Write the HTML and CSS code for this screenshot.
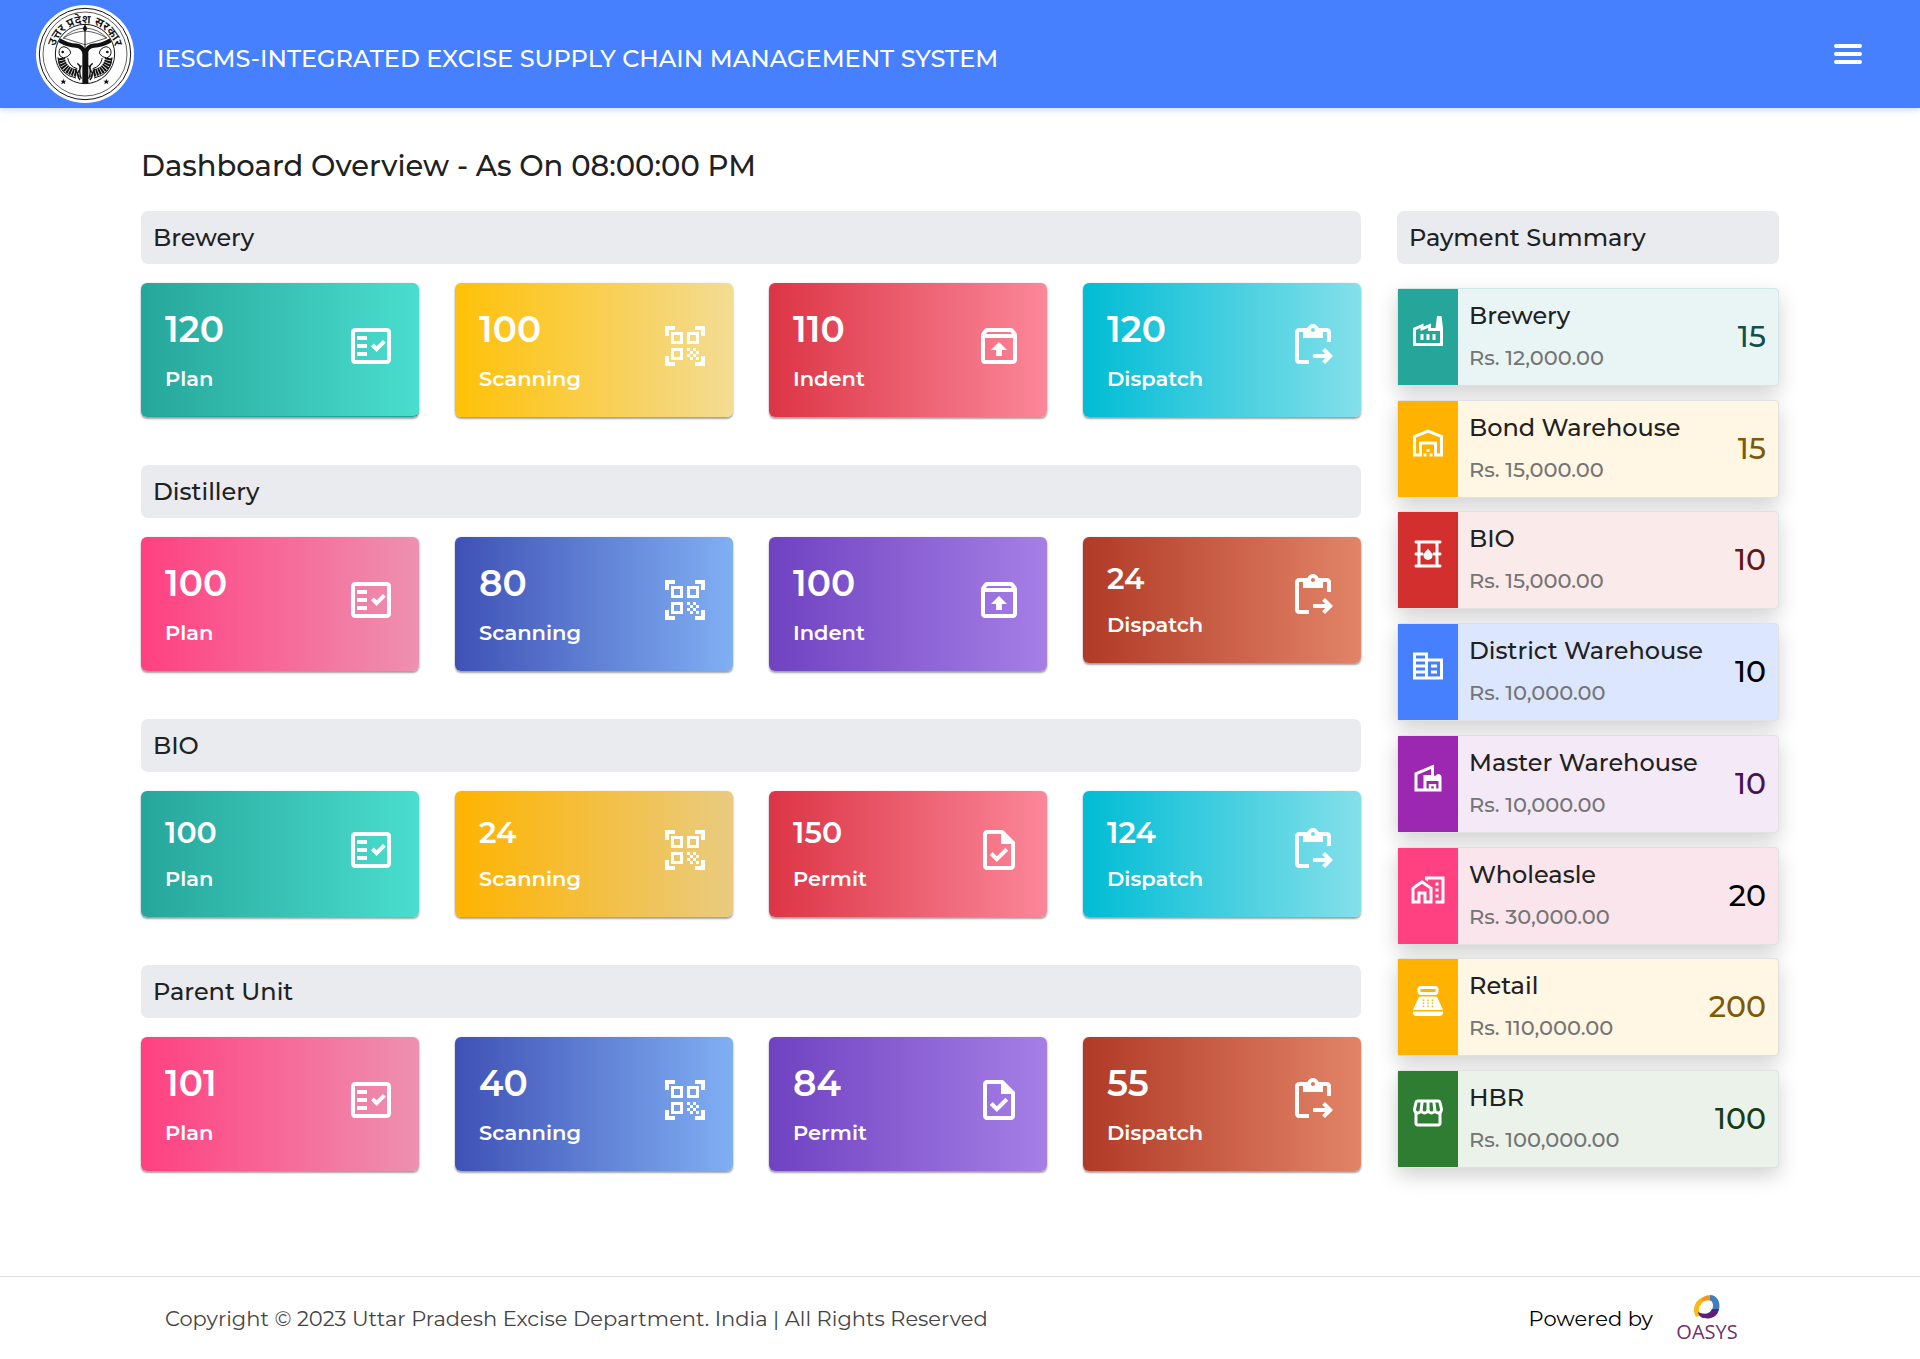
FILE: index.html
```html
<!DOCTYPE html>
<html lang="en">
<head>
<meta charset="utf-8">
<title>IESCMS Dashboard</title>
<meta name="viewport" content="width=device-width, initial-scale=1">
<link rel="stylesheet" href="styles.css">
</head>
<body>
<svg class="sprite" aria-hidden="true">
  <symbol id="i-plan" viewBox="0 0 24 24"><path d="M20 3H4c-1.100 0-2 .9-2 2v14c0 1.100.9 2 2 2h16c1.100 0 2-.9 2-2V5c0-1.100-.9-2-2-2zm0 16H4V5h16v14zM19.410 10.420 17.990 9l-3.170 3.170-1.410-1.420L12 12.160 14.820 15zM5 7h5v2H5zM5 11h5v2H5zM5 15h5v2H5z"/></symbol>
  <symbol id="i-scan" viewBox="0 0 24 24"><path d="M9.500 6.500v3h-3v-3h3M11 5H5v6h6V5zm-1.500 9.500v3h-3v-3h3M11 13H5v6h6v-6zm6.500-6.500v3h-3v-3h3M19 5h-6v6h6V5zm-6 8h1.500v1.500H13V13zm1.500 1.500H16V16h-1.500v-1.500zM16 13h1.500v1.500H16V13zm-3 3h1.500v1.500H13V16zm1.500 1.500H16V19h-1.500v-1.500zM16 16h1.500v1.500H16V16zm1.500-1.500H19V16h-1.500v-1.500zm0 3H19V19h-1.500v-1.500zM22 7h-2V4h-3V2h5v5zm0 15v-5h-2v3h-3v2h5zM2 22h5v-2H4v-3H2v5zM2 2v5h2V4h3V2H2z"/></symbol>
  <symbol id="i-indent" viewBox="0 0 24 24"><path d="m20.550 5.220-1.390-1.680C18.880 3.210 18.470 3 18 3H6c-.47 0-.88.21-1.150.55L3.460 5.220C3.170 5.570 3 6.010 3 6.500V19c0 1.100.89 2 2 2h14c1.100 0 2-.9 2-2V6.500c0-.49-.17-.93-.45-1.280zM6.240 5h11.520l.83 1H5.420l.82-1zM5 19V8h14v11H5zm3-5h2.550v3h2.900v-3H16l-4-4z"/></symbol>
  <symbol id="i-dispatch" viewBox="0 0 24 24"><path d="M5 5h2v3h10V5h2v5h2V5c0-1.100-.9-2-2-2h-4.180C14.400 1.840 13.300 1 12 1s-2.400.84-2.820 2H5c-1.100 0-2 .9-2 2v14c0 1.100.9 2 2 2h5v-2H5V5zm7-2c.55 0 1 .45 1 1s-.45 1-1 1-1-.45-1-1 .45-1 1-1zM18.010 13l-1.420 1.410 1.580 1.580H12v2h6.170l-1.580 1.580L18.010 21 22 16.990z"/></symbol>
  <symbol id="i-permit" viewBox="0 0 24 24"><path d="M14 2H6c-1.100 0-2 .9-2 2v16c0 1.100.89 2 2 2h12c1.100 0 2-.9 2-2V8l-6-6zm4 18H6V4h7v5h5v11zM8.820 13.050 7.400 14.460 10.940 18l5.660-5.660-1.410-1.410-4.240 4.240z"/></symbol>
  <symbol id="i-factory" viewBox="0 0 24 24"><path d="M22 22H2V10l7-3v2l5-2v3h3l1-8h3l1 8v12zM12 9.950l-5 2V10l-3 1.320V20h16v-8h-8V9.950zM11 18h2v-4h-2v4zm-4 0h2v-4H7v4zm10-4h-2v4h2v-4z"/></symbol>
  <symbol id="i-warehouse" viewBox="0 0 24 24"><path d="M20 8.350V19h-2v-8H6v8H4V8.350l8-3.200 8 3.200zM22 21V7L12 3 2 7v14h6v-8h8v8h6zm-11-2H9v2h2v-2zm2-3h-2v2h2v-2zm2 3h-2v2h2v-2z"/></symbol>
  <symbol id="i-barrel" viewBox="0 0 24 24"><path fill-rule="evenodd" d="M20 13c.55 0 1-.45 1-1s-.45-1-1-1h-1V5h1c.55 0 1-.45 1-1s-.45-1-1-1H4c-.55 0-1 .45-1 1s.45 1 1 1h1v6H4c-.55 0-1 .45-1 1s.45 1 1 1h1v6H4c-.55 0-1 .45-1 1s.45 1 1 1h16c.55 0 1-.45 1-1s-.45-1-1-1h-1v-6h1zM17 19H7v-6h1c.55 0 1-.45 1-1s-.45-1-1-1H7V5h10v6h-1c-.55 0-1 .45-1 1s.45 1 1 1h1v6zM12 16c1.660 0 3-1.320 3-2.950 0-1.300-.52-1.670-3-4.550-2.470 2.860-3 3.240-3 4.550C9 14.680 10.340 16 12 16z"/></symbol>
  <symbol id="i-district" viewBox="0 0 24 24"><path fill-rule="evenodd" d="M12 7V3H2v18h20V7H12zm-2 12H4v-2h6v2zm0-4H4v-2h6v2zm0-4H4V9h6v2zm0-4H4V5h6v2zm10 12h-8V9h8v10zm-2-8h-4v2h4v-2zm0 4h-4v2h4v-2z"/></symbol>
  <symbol id="i-master" viewBox="0 0 24 24"><path fill-rule="evenodd" d="M3 21V8.500L16 3v7.500h1.200a2 2 0 0 1 3.800 1V21H3zM5 19h4v-9h5V6L5 9.900V19zM11 19h1.500v-3h5v3H19v-5h-8zM14.200 17.500h1.600V19h-1.600z"/></symbol>
  <symbol id="i-wholesale" viewBox="0 0 24 24"><path d="M17 11h2v2h-2zM17 15h2v2h-2zM17 7h2v2h-2zM10 3v1.970l2 1.430V5h9v14h-4v2h6V3zM8 5.370l-7 5V21h6v-6h2v6h6V10.370l-7-5zM13 19h-2v-6H5v6H3v-7.600l5-3.570 5 3.570V19z"/></symbol>
  <symbol id="i-retail" viewBox="0 0 24 24"><path fill-rule="evenodd" d="M17 2H7c-1.100 0-2 .9-2 2v2c0 1.100.9 2 2 2h10c1.100 0 2-.9 2-2V4c0-1.100-.9-2-2-2zm0 4H7V4h10v2zm3 16H4c-1.100 0-2-.9-2-2v-1h20v1c0 1.100-.9 2-2 2zM18.530 10.190C18.210 9.470 17.490 9 16.700 9H7.300c-.79 0-1.510.47-1.830 1.190L2 18h20l-3.470-7.810zM9.500 16h-1v-1h1v1zm0-2h-1v-1h1v1zm0-2h-1v-1h1v1zm3 4h-1v-1h1v1zm0-2h-1v-1h1v1zm0-2h-1v-1h1v1zm3 4h-1v-1h1v1zm0-2h-1v-1h1v1zm0-2h-1v-1h1v1z"/></symbol>
  <symbol id="i-store" viewBox="0 0 24 24"><path d="m21.900 8.890-1.050-4.370c-.22-.9-1-1.520-1.910-1.520H5.050c-.9 0-1.690.63-1.900 1.520L2.100 8.890c-.24 1.020-.02 2.060.62 2.880.08.11.19.19.28.29V19c0 1.100.9 2 2 2h14c1.100 0 2-.9 2-2v-6.940c.09-.09.2-.18.28-.28.64-.82.87-1.870.62-2.890zm-2.990-3.900 1.050 4.370c.1.42.01.84-.25 1.170-.14.18-.44.47-.94.47-.61 0-1.140-.49-1.210-1.140L16.980 5l1.930-.01zM13 5h1.960l.54 4.520c.05.39-.07.78-.33 1.070-.22.26-.54.41-.95.41-.67 0-1.220-.59-1.220-1.310V5zM8.490 9.520 9.040 5H11v4.690c0 .72-.55 1.310-1.290 1.310-.34 0-.65-.15-.89-.41-.25-.29-.37-.68-.33-1.070zm-4.450-.16L5.050 5h1.970l-.58 4.860c-.08.65-.6 1.140-1.210 1.140-.49 0-.8-.29-.93-.47-.27-.32-.36-.75-.26-1.170zM5 19v-6.030c.08.01.15.03.23.03.87 0 1.660-.36 2.240-.95.6.6 1.400.95 2.310.95.87 0 1.650-.36 2.230-.93.59.57 1.390.93 2.290.93.84 0 1.640-.35 2.240-.95.58.59 1.370.95 2.240.95.08 0 .15-.02.23-.03V19H5z"/></symbol>
</svg>

<header class="topbar">
  <svg class="emblem" viewBox="108 15 294 294" role="img" aria-label="Uttar Pradesh Government emblem">
    <circle cx="255" cy="162" r="147" fill="#fff"/>
    <g fill="none" stroke="#111">
      <circle cx="255" cy="162" r="137" stroke-width="3"/>
      <circle cx="255" cy="162" r="126" stroke-width="2"/>
      <circle cx="255" cy="162" r="89" stroke-width="3"/>
      <path d="M190 114Q215 86 255 84Q295 86 320 114L255 134Z" stroke-width="2"/>
      <path d="M190 114Q218 96 255 93Q292 96 320 114" stroke-width="2"/>
      <path d="M255 80V150" stroke-width="3"/>
      <path d="M178 121Q205 136 228 137Q248 139 255 160Q262 139 282 137Q305 136 332 121" stroke-width="13"/>
      <path d="M256 148V250" stroke-width="18"/>
      <g id="fish">
        <path d="M177 160Q176 142 192 140Q211 145 212 160Q205 172 190 174Q178 170 177 160Z" stroke-width="3"/>
        <path d="M184 174Q188 212 232 220" stroke-width="22" stroke-dasharray="6 2"/>
        <path d="M203 174Q208 200 232 206M174 172Q176 224 228 234" stroke-width="3"/>
        <path d="M232 190Q246 200 236 214Q228 224 240 240M244 196Q234 212 244 236M226 206L238 232" stroke-width="4"/>
      </g>
      <use href="#fish" transform="matrix(-1 0 0 1 510 0)"/>
    </g>
    <g fill="#111">
      <circle cx="188" cy="156" r="4"/><circle cx="322" cy="156" r="4"/>
      <path d="M255 72l7 14-7 10-7-10z"/>
      <path id="star" d="M190 236l2 6h7l-5 4 2 7-6-4-6 4 2-7-5-4h7z"/>
      <use href="#star" x="129"/>
      <path id="arc" d="M163 162A92 92 0 0 1 347 162" fill="none"/>
      <text class="emblem-text" text-anchor="middle"><textPath href="#arc" startOffset="50%">उत्तर प्रदेश सरकार</textPath></text>
    </g>
  </svg>
  <h1 class="brand">IESCMS-INTEGRATED EXCISE SUPPLY CHAIN MANAGEMENT SYSTEM</h1>
  <button class="menu" type="button" aria-label="Menu"><span></span><span></span><span></span></button>
</header>

<main class="page">
  <h2 class="page-title">Dashboard Overview - As On 08:00:00 PM</h2>
  <div class="columns">
    <div class="units">
      <section>
        <h3 class="bar">Brewery</h3>
        <div class="cards">
          <article class="card teal lined"><div><p class="num">120</p><p class="label">Plan</p></div><svg class="icon"><use href="#i-plan"/></svg></article>
          <article class="card yellow"><div><p class="num">100</p><p class="label">Scanning</p></div><svg class="icon"><use href="#i-scan"/></svg></article>
          <article class="card red"><div><p class="num">110</p><p class="label">Indent</p></div><svg class="icon"><use href="#i-indent"/></svg></article>
          <article class="card cyan"><div><p class="num">120</p><p class="label">Dispatch</p></div><svg class="icon"><use href="#i-dispatch"/></svg></article>
        </div>
      </section>
      <section>
        <h3 class="bar">Distillery</h3>
        <div class="cards">
          <article class="card pink"><div><p class="num">100</p><p class="label">Plan</p></div><svg class="icon"><use href="#i-plan"/></svg></article>
          <article class="card indigo"><div><p class="num">80</p><p class="label">Scanning</p></div><svg class="icon"><use href="#i-scan"/></svg></article>
          <article class="card purple"><div><p class="num">100</p><p class="label">Indent</p></div><svg class="icon"><use href="#i-indent"/></svg></article>
          <article class="card brown"><div><p class="num small">24</p><p class="label">Dispatch</p></div><svg class="icon"><use href="#i-dispatch"/></svg></article>
        </div>
      </section>
      <section>
        <h3 class="bar">BIO</h3>
        <div class="cards">
          <article class="card teal"><div><p class="num small">100</p><p class="label">Plan</p></div><svg class="icon"><use href="#i-plan"/></svg></article>
          <article class="card amber"><div><p class="num small">24</p><p class="label">Scanning</p></div><svg class="icon"><use href="#i-scan"/></svg></article>
          <article class="card red"><div><p class="num small">150</p><p class="label">Permit</p></div><svg class="icon"><use href="#i-permit"/></svg></article>
          <article class="card cyan"><div><p class="num small">124</p><p class="label">Dispatch</p></div><svg class="icon"><use href="#i-dispatch"/></svg></article>
        </div>
      </section>
      <section>
        <h3 class="bar">Parent Unit</h3>
        <div class="cards">
          <article class="card pink"><div><p class="num">101</p><p class="label">Plan</p></div><svg class="icon"><use href="#i-plan"/></svg></article>
          <article class="card indigo"><div><p class="num">40</p><p class="label">Scanning</p></div><svg class="icon"><use href="#i-scan"/></svg></article>
          <article class="card purple"><div><p class="num">84</p><p class="label">Permit</p></div><svg class="icon"><use href="#i-permit"/></svg></article>
          <article class="card brown"><div><p class="num">55</p><p class="label">Dispatch</p></div><svg class="icon"><use href="#i-dispatch"/></svg></article>
        </div>
      </section>
    </div>

    <aside class="payments">
      <h3 class="bar">Payment Summary</h3>
      <ul class="pay-list">
        <li class="pay p-teal"><span class="tile"><svg><use href="#i-factory"/></svg></span><div class="info"><p class="name">Brewery</p><p class="amount">Rs. 12,000.00</p></div><span class="count">15</span></li>
        <li class="pay p-amber"><span class="tile"><svg><use href="#i-warehouse"/></svg></span><div class="info"><p class="name">Bond Warehouse</p><p class="amount">Rs. 15,000.00</p></div><span class="count">15</span></li>
        <li class="pay p-red"><span class="tile"><svg><use href="#i-barrel"/></svg></span><div class="info"><p class="name">BIO</p><p class="amount">Rs. 15,000.00</p></div><span class="count">10</span></li>
        <li class="pay p-blue"><span class="tile"><svg><use href="#i-district"/></svg></span><div class="info"><p class="name">District Warehouse</p><p class="amount">Rs. 10,000.00</p></div><span class="count">10</span></li>
        <li class="pay p-purple"><span class="tile"><svg><use href="#i-master"/></svg></span><div class="info"><p class="name">Master Warehouse</p><p class="amount">Rs. 10,000.00</p></div><span class="count">10</span></li>
        <li class="pay p-pink"><span class="tile"><svg><use href="#i-wholesale"/></svg></span><div class="info"><p class="name">Wholeasle</p><p class="amount">Rs. 30,000.00</p></div><span class="count">20</span></li>
        <li class="pay p-amber"><span class="tile"><svg><use href="#i-retail"/></svg></span><div class="info"><p class="name">Retail</p><p class="amount">Rs. 110,000.00</p></div><span class="count">200</span></li>
        <li class="pay p-green"><span class="tile"><svg><use href="#i-store"/></svg></span><div class="info"><p class="name">HBR</p><p class="amount">Rs. 100,000.00</p></div><span class="count">100</span></li>
      </ul>
    </aside>
  </div>
</main>

<footer class="footer">
  <p class="copy">Copyright © 2023 Uttar Pradesh Excise Department. India | All Rights Reserved</p>
  <div class="powered">
    <span>Powered by</span>
    <svg class="oasys" viewBox="0 -3 64 52" role="img" aria-label="OASYS">
      <path fill="#f7941e" d="M22 9C25 3 30 0 36 0V6C31 4 27 6 25 11z"/>
      <path fill="#fdb913" d="M26 3C19 7 17 15 21 22L26 20C23 16 23 10 28 7z"/>
      <path fill="#3f7fc1" d="M35 0C42 0 46 7 44 15L37 15C39 10 38 7 35 5z"/>
      <path fill="#5b1f7a" d="M44 14C43 21 36 25 30 23C26 23 24 21 23 17C29 20 35 19 37 14z"/>
      <text x="32" y="44" text-anchor="middle" class="oasys-text">OASYS</text>
    </svg>
  </div>
</footer>
</body>
</html>
```
FILE: styles.css
```css
* { box-sizing: border-box; }
body {
  margin: 0;
  min-height: 100vh;
  display: flex;
  flex-direction: column;
  background: #fff;
  color: #212121;
  font-family: Montserrat, Inter, "Liberation Sans", sans-serif;
  font-weight: 500;
}
h1, h2, h3, p, ul { margin: 0; padding: 0; font-weight: 500; }
ul { list-style: none; }
.sprite { position: absolute; width: 0; height: 0; }

/* Top bar */
.topbar {
  display: flex;
  align-items: center;
  height: 108px;
  padding: 0 58px 0 36px;
  background: #4680ff;
  color: #fff;
  box-shadow: 0 2px 6px rgba(70, 128, 255, .3);
}
.emblem { width: 98px; height: 98px; flex: none; }
.emblem-text { font: 600 36px "Noto Sans Devanagari", "Noto Sans", sans-serif; }
.brand { margin-left: 23px; padding-top: 10px; font-size: 24px; line-height: 32px; color: #fff; }
.menu {
  display: flex;
  flex-direction: column;
  gap: 4px;
  margin-left: auto;
  padding: 0;
  border: 0;
  background: none;
}
.menu span { width: 28px; height: 4px; border-radius: 2px; background: #fff; }

/* Page */
.page { flex: 1; padding: 38px 141px 104px; }
.page-title { font-size: 29px; line-height: 40px; margin-bottom: 25px; }
.columns { display: grid; grid-template-columns: 1220fr 382fr; gap: 36px; }
.bar {
  padding: 0 12px;
  border-radius: 7px;
  background: #e9ebee;
  font-size: 24px;
  line-height: 53px;
}
.units { display: flex; flex-direction: column; gap: 48px; }
.cards {
  display: grid;
  grid-template-columns: repeat(4, 1fr);
  align-items: start;
  gap: 36px;
  margin-top: 19px;
}
.card {
  display: flex;
  align-items: center;
  justify-content: space-between;
  padding: 20px 24px 24px;
  border-radius: 6px;
  color: #fff;
  box-shadow: 0 2px 2px rgba(0, 0, 0, .35), 0 0 2px rgba(0, 0, 0, .15);
}
.lined { padding-bottom: 23px; border-bottom: 1px solid #26a69a; }
.num { font-size: 36px; line-height: 52px; font-weight: 600; }
.num.small { font-size: 30px; line-height: 44px; }
.label { margin-top: 10px; font-size: 21px; line-height: 28px; font-weight: 600; }
.icon { width: 48px; height: 48px; margin-bottom: 4px; fill: currentColor; flex: none; }
.teal { background: linear-gradient(90deg, #26a69a, #4adecf); }
.yellow { background: linear-gradient(90deg, #ffc107, #f3dc94); }
.red { background: linear-gradient(90deg, #dc3545, #fb8799); }
.cyan { background: linear-gradient(90deg, #00bcd4, #84e0ea); }
.pink { background: linear-gradient(90deg, #ff4081, #ee91b0); }
.indigo { background: linear-gradient(90deg, #3f51b5, #80aff3); }
.purple { background: linear-gradient(90deg, #6f42c1, #a67fe6); }
.brown { background: linear-gradient(90deg, #b03a26, #e28467); }
.amber { background: linear-gradient(90deg, #ffb300, #e9cb80); }

/* Payment summary */
.payments { display: flex; flex-direction: column; padding-bottom: 3px; }
.pay-list {
  flex: 1;
  display: flex;
  flex-direction: column;
  justify-content: space-between;
  margin-top: 24px;
}
.pay {
  display: flex;
  align-items: stretch;
  height: 98px;
  border: 1px solid #dfe1e3;
  border-radius: 4px;
  box-shadow: 0 8px 20px rgba(0, 0, 0, .18);
}
.tile { display: flex; justify-content: center; width: 60px; padding-top: 24px; flex: none; color: #fff; }
.tile svg { width: 36px; height: 36px; fill: currentColor; }
.info { flex: 1; padding: 11px 0 0 11px; white-space: nowrap; }
.name { font-size: 24px; line-height: 32px; }
.amount { margin-top: 12px; font-size: 21px; line-height: 28px; color: #757575; }
.count { align-self: center; padding-right: 12px; font-size: 30px; line-height: 36px; }
.p-teal { background: #e9f5f4; border-color: #cfe9e6; }
.p-teal .tile { background: #26a69a; }
.p-teal .count { color: #134f4a; }
.p-amber { background: #fff6e3; }
.p-amber .tile { background: #ffb300; }
.p-amber .count { color: #7d5a0a; }
.p-red { background: #faeaea; }
.p-red .tile { background: #d32f2f; }
.p-red .count { color: #651616; }
.p-blue { background: #dce7ff; }
.p-blue .tile { background: #4680ff; }
.p-blue .count, .p-pink .count { color: #000; }
.p-purple { background: #f4e9f7; }
.p-purple .tile { background: #9c27b0; }
.p-purple .count { color: #471452; }
.p-pink { background: #f9e5eb; }
.p-pink .tile { background: #ff4081; }
.p-green { background: #eaf2ea; }
.p-green .tile { background: #2e7d32; }
.p-green .count { color: #173c19; }

/* Footer */
.footer {
  display: flex;
  align-items: center;
  justify-content: space-between;
  height: 83px;
  padding: 0 181px 0 165px;
  border-top: 1px solid #dedede;
  font-size: 21px;
  font-weight: 400;
}
.copy { font-weight: 400; color: #444; }
.powered { display: flex; align-items: center; gap: 22px; color: #000; }
.oasys { width: 64px; height: 52px; }
.oasys-text { font: 500 20px "Open Sans", sans-serif; fill: #71316f; }
```
